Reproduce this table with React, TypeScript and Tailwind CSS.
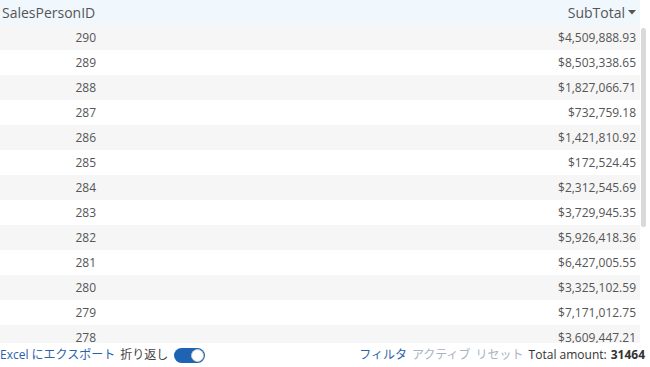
import React from "react";

const rows: [number, string][] = [
  [290, "$4,509,888.93"],
  [289, "$8,503,338.65"],
  [288, "$1,827,066.71"],
  [287, "$732,759.18"],
  [286, "$1,421,810.92"],
  [285, "$172,524.45"],
  [284, "$2,312,545.69"],
  [283, "$3,729,945.35"],
  [282, "$5,926,418.36"],
  [281, "$6,427,005.55"],
  [280, "$3,325,102.59"],
  [279, "$7,171,012.75"],
  [278, "$3,609,447.21"],
  [277, "$3,189,418.37"],
];

export default function App() {
  return (
    <div
      className="w-[650px] h-[367px] bg-white flex flex-col overflow-hidden text-[#555555]"
      style={{ fontFamily: '"Open Sans", "Noto Sans CJK JP", sans-serif' }}
    >
      <div className="relative h-[343px] overflow-hidden flex">
        <div className="w-[640px] flex flex-col">
          <div className="h-[25px] shrink-0 flex items-center bg-[#f0f7fd] text-[14px] text-[#555555]">
            <div className="w-[100px] pl-[2px] whitespace-nowrap">SalesPersonID</div>
            <div className="flex-1 flex items-center justify-end pr-[4px]">
              SubTotal
              <svg width="8" height="5" viewBox="0 0 8 5" className="ml-[3px]">
                <path d="M0 0 L8 0 L4 4.5 Z" fill="#555555" />
              </svg>
            </div>
          </div>
          {rows.map(([id, v], i) => (
            <div
              key={id}
              className={`h-[25px] shrink-0 flex items-center text-[12px] ${
                i % 2 === 0 ? "bg-[#f6f6f6]" : "bg-white"
              }`}
            >
              <div className="w-[100px] text-right pr-[4px]">{id}</div>
              <div className="flex-1 text-right pr-[4px]">{v}</div>
            </div>
          ))}
        </div>
        <div className="w-[10px] relative">
          <div className="absolute left-[1px] top-[28px] w-[5px] h-[199px] rounded-[3px] bg-[#d9d9d9]" />
        </div>
      </div>
      <div className="h-[24px] flex items-center justify-between text-[12px]">
        <div className="flex items-center">
          <span className="text-[#2a63ad]">Excel にエクスポート</span>
          <span className="ml-[5px] text-[#444444]">折り返し</span>
          <span className="ml-[6px] w-[31px] h-[15px] rounded-full bg-[#1f63b5] relative inline-block">
            <span className="absolute right-[1px] top-[1px] w-[13px] h-[13px] rounded-full bg-white border border-[#c8c8c8]" />
          </span>
        </div>
        <div className="flex items-center pr-[5px]">
          <span className="text-[#2a63ad]">フィルタ</span>
          <span className="ml-[5px] text-[#a9b3c2]">アクティブ</span>
          <span className="ml-[5px] text-[#a9b3c2]">リセット</span>
          <span className="ml-[5px] text-[#333333]">Total amount:</span>
          <span className="ml-[4px] font-bold text-[#333333]">31464</span>
        </div>
      </div>
    </div>
  );
}
